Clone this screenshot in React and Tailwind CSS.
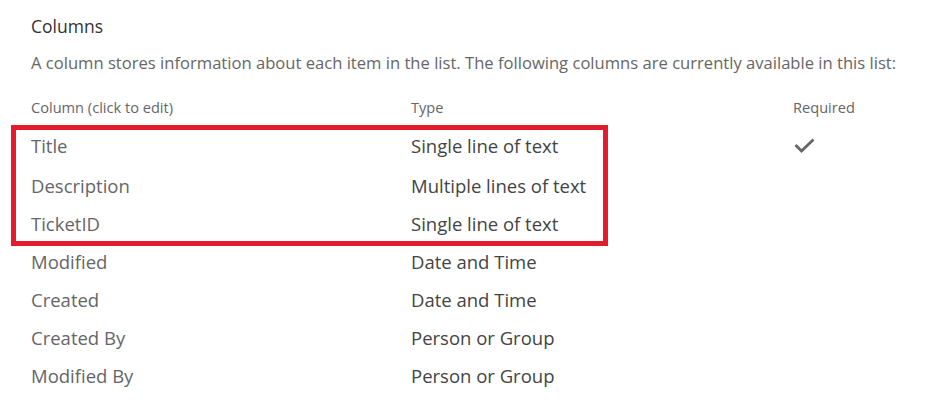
const rows = [
    { name: 'Title', type: 'Single line of text', required: true },
    { name: 'Description', type: 'Multiple lines of text' },
    { name: 'TicketID', type: 'Single line of text' },
    { name: 'Modified', type: 'Date and Time' },
    { name: 'Created', type: 'Date and Time' },
    { name: 'Created By', type: 'Person or Group' },
    { name: 'Modified By', type: 'Person or Group' },
];

function Check() {
    return (
        <svg width="21" height="15" viewBox="0 0 21 15" fill="none">
            <path d="M1.5 7 L7.5 13 L19.5 1.5" stroke="#666" strokeWidth="2.8" />
        </svg>
    );
}

export default function App() {
    return (
        <div
            className="relative w-[940px] h-[408px] bg-white overflow-hidden pl-[31px]"
            style={{ fontFamily: '"Open Sans", "Noto Sans", sans-serif' }}
        >
            {/* Section heading */}
            <h2 className="pt-[14px] text-[17.5px] leading-[24px] text-[#333]">Columns</h2>
            <p className="mt-[14px] text-[16.6px] leading-[22px] text-[#666]">
                A column stores information about each item in the list. The following columns are currently available in this list:
            </p>

            {/* Column table */}
            <div className="mt-[22px]">
                <div className="grid grid-cols-[380px_382px_1fr] h-[24px] items-center text-[14.6px] text-[#666]">
                    <span>Column (click to edit)</span>
                    <span>Type</span>
                    <span>Required</span>
                </div>
                <div className="mt-[4px]">
                    {rows.map((r, i) => (
                        <div
                            key={r.name}
                            className={`grid grid-cols-[380px_382px_1fr] items-center text-[18.5px] ${i === 0 ? 'h-[43px]' : 'h-[38px]'}`}
                        >
                            <span className="text-[#666]">{r.name}</span>
                            <span className="text-[#444]">{r.type}</span>
                            <span className="pl-[1px] flex">{r.required && <Check />}</span>
                        </div>
                    ))}
                </div>
            </div>

            {/* Red highlight annotation */}
            <div className="absolute left-[11px] top-[125px] w-[597px] h-[121px] border-[5px] border-[#e31b2a] pointer-events-none" />
        </div>
    );
}
